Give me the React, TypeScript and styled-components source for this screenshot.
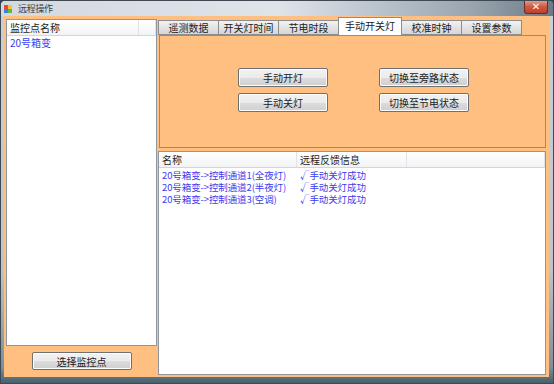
import styled, { createGlobalStyle } from "styled-components";

const GlobalStyle = createGlobalStyle`
  html, body {
    margin: 0;
    padding: 0;
    background: #2c4654;
  }
  body {
    font-family: "Noto Sans CJK SC", "Liberation Sans", sans-serif;
  }
`;

const Window = styled.div`
  width: 554px;
  height: 384px;
  box-sizing: border-box;
  display: flex;
  flex-direction: column;
  border: 1px solid #3e4953;
  border-radius: 5px 5px 0 0;
  overflow: hidden;
  background: linear-gradient(#c9d0d8 0%, #bcc5ce 70%, #7f8e98 96%, #46606c 100%);
`;

const TitleBar = styled.div`
  height: 15px;
  display: flex;
  align-items: center;
  padding-left: 3px;
  background: linear-gradient(90deg, #d3d9df 0%, #dfe4e9 50%, #9aa5b0 85%, #6d7a86 100%);
`;

const AppIcon = styled.svg`
  width: 8px;
  height: 8px;
  margin-right: 6px;
`;

const Title = styled.span`
  font-size: 9px;
  color: #3a3f44;
  letter-spacing: -0.3px;
`;

const CloseButton = styled.div`
  margin-left: auto;
  margin-right: 5px;
  align-self: flex-start;
  margin-top: -1px;
  width: 24px;
  height: 14px;
  box-sizing: border-box;
  border: 1px solid #6b2a22;
  border-top: none;
  border-radius: 0 0 3px 3px;
  background: linear-gradient(#e8a596, #cf5a43 50%, #c2402a);
  color: #fff;
  font-size: 10px;
  font-weight: bold;
  display: flex;
  align-items: center;
  justify-content: center;
  font-family: "DejaVu Sans", sans-serif;
`;

const Client = styled.div`
  flex: 1;
  margin: 0 4px 6px 3px;
  background: #ffbf80;
  display: flex;
  padding: 1px 3px 2px 2px;
  min-height: 0;
`;

const LeftColumn = styled.div`
  width: 151px;
  margin-top: 2px;
  display: flex;
  flex-direction: column;
`;

const ListBox = styled.div`
  flex: 1;
  background: #fff;
  border: 1px solid #8f969e;
  display: flex;
  flex-direction: column;
`;

const HeaderRow = styled.div`
  display: flex;
  height: 15px;
  background: linear-gradient(#ffffff, #f2f3f5);
  border-bottom: 1px solid #d5d5d5;
`;

const HeaderCell = styled.div<{ $w?: number }>`
  width: ${(p) => (p.$w ? `${p.$w}px` : "auto")};
  flex: ${(p) => (p.$w ? "none" : "1")};
  box-sizing: border-box;
  padding-left: 3px;
  font-size: 10px;
  line-height: 15px;
  color: #1e1e1e;
  border-right: 1px solid #e2e3e6;
  white-space: nowrap;
`;

const Item = styled.div`
  font-size: 10px;
  line-height: 12px;
  color: #3b3bf0;
  padding-left: 3px;
  margin-top: 1px;
  white-space: nowrap;
`;

const LeftFooter = styled.div`
  height: 29px;
  display: flex;
  justify-content: center;
  padding-top: 6px;
  box-sizing: border-box;
`;

const Button = styled.button<{ $w: number; $h: number }>`
  width: ${(p) => p.$w}px;
  height: ${(p) => p.$h}px;
  padding: 0;
  font-family: inherit;
  font-size: 10px;
  color: #1c1c1c;
  border: 1px solid #707070;
  border-radius: 2px;
  background: linear-gradient(#f2f2f2 0%, #ebebeb 50%, #dddddd 51%, #cfcfcf 100%);
  box-shadow: inset 0 0 0 1px #fcfcfc;
`;

const RightColumn = styled.div`
  flex: 1;
  margin-left: 1px;
  display: flex;
  flex-direction: column;
`;

const TabStrip = styled.div`
  height: 18px;
  display: flex;
  align-items: flex-end;
  padding-left: 1px;
`;

const Tab = styled.div<{ $w: number; $active?: boolean }>`
  width: ${(p) => p.$w}px;
  height: ${(p) => (p.$active ? 18 : 15)}px;
  box-sizing: border-box;
  border: 1px solid #8d8d8d;
  border-bottom: ${(p) => (p.$active ? "none" : "1px solid #8d8d8d")};
  margin-left: -1px;
  background: ${(p) =>
    p.$active ? "#ffffff" : "linear-gradient(#f2f2f2, #e2e2e2 55%, #d6d6d6)"};
  font-size: 10px;
  line-height: ${(p) => (p.$active ? 15 : 13)}px;
  text-align: center;
  color: #222;
  white-space: nowrap;
  position: relative;
  z-index: ${(p) => (p.$active ? 1 : 0)};
`;

const TabPanel = styled.div`
  height: 113px;
  box-sizing: border-box;
  margin-left: 1px;
  border: 1px solid #8d8d8d;
  background: #ffbf80;
  padding: 32px 0 0 78px;
  display: grid;
  grid-template-columns: 90px 90px;
  grid-auto-rows: 19px;
  column-gap: 51px;
  row-gap: 6px;
  align-content: start;
`;

const ListView = styled.div`
  flex: 1;
  margin-top: 3px;
  background: #fff;
  border: 1px solid #8f969e;
  display: flex;
  flex-direction: column;
`;

const Row = styled.div`
  display: flex;
  height: 12px;
`;

const Cell = styled.div<{ $w?: number }>`
  width: ${(p) => (p.$w ? `${p.$w}px` : "auto")};
  flex: ${(p) => (p.$w ? "none" : "1")};
  padding-left: 3px;
  font-size: 9.5px;
  letter-spacing: -0.1px;
  line-height: 12px;
  color: #3b3bf0;
  white-space: nowrap;
  box-sizing: border-box;
`;

const Rows = styled.div`
  padding-top: 1px;
`;

const tabs = [
  { label: "遥测数据", w: 61 },
  { label: "开关灯时间", w: 61 },
  { label: "节电时段", w: 61 },
  { label: "手动开关灯", w: 64, active: true },
  { label: "校准时钟", w: 61 },
  { label: "设置参数", w: 61 },
];

const channels = [
  "20号箱变->控制通道1(全夜灯)",
  "20号箱变->控制通道2(半夜灯)",
  "20号箱变->控制通道3(空调)",
];

export default function App() {
  return (
    <>
      <GlobalStyle />
      <Window>
        <TitleBar>
          <AppIcon viewBox="0 0 8 8">
            <rect x="0" y="0" width="4" height="4" fill="#e8483a" />
            <rect x="4" y="0" width="4" height="4" fill="#f4c531" />
            <rect x="0" y="4" width="4" height="4" fill="#3b7fe0" />
            <rect x="4" y="4" width="4" height="4" fill="#5bb84a" />
          </AppIcon>
          <Title>远程操作</Title>
          <CloseButton>✕</CloseButton>
        </TitleBar>
        <Client>
          <LeftColumn>
            <ListBox>
              <HeaderRow>
                <HeaderCell $w={132}>监控点名称</HeaderCell>
                <HeaderCell />
              </HeaderRow>
              <Item>20号箱变</Item>
            </ListBox>
            <LeftFooter>
              <Button $w={100} $h={18}>选择监控点</Button>
            </LeftFooter>
          </LeftColumn>
          <RightColumn>
            <TabStrip>
              {tabs.map((t) => (
                <Tab key={t.label} $w={t.w} $active={t.active}>
                  {t.label}
                </Tab>
              ))}
            </TabStrip>
            <TabPanel>
              <Button $w={90} $h={19}>手动开灯</Button>
              <Button $w={90} $h={19}>切换至旁路状态</Button>
              <Button $w={90} $h={19}>手动关灯</Button>
              <Button $w={90} $h={19}>切换至节电状态</Button>
            </TabPanel>
            <ListView>
              <HeaderRow>
                <HeaderCell $w={138}>名称</HeaderCell>
                <HeaderCell $w={110}>远程反馈信息</HeaderCell>
                <HeaderCell />
              </HeaderRow>
              <Rows>
                {channels.map((c) => (
                  <Row key={c}>
                    <Cell $w={138}>{c}</Cell>
                    <Cell>√手动关灯成功</Cell>
                  </Row>
                ))}
              </Rows>
            </ListView>
          </RightColumn>
        </Client>
      </Window>
    </>
  );
}
